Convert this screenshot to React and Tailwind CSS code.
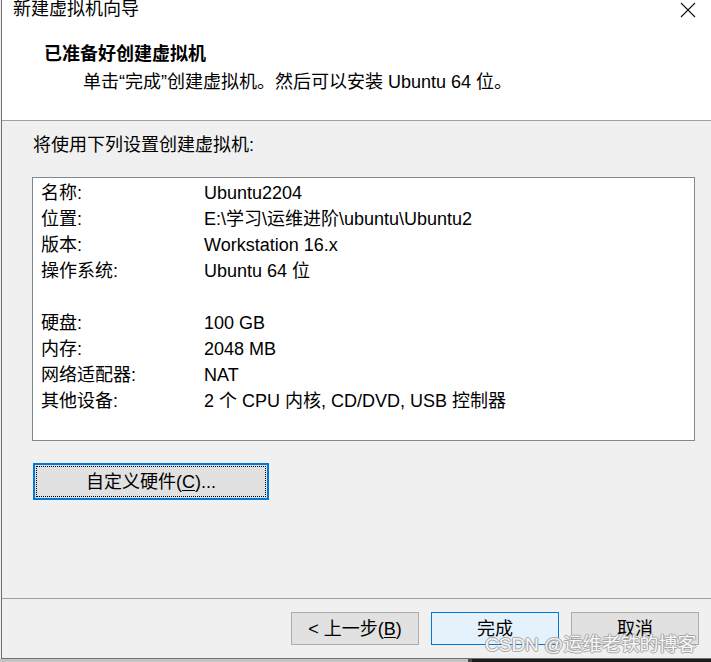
import React from "react";

const rows = [
  ["名称:", "Ubuntu2204"],
  ["位置:", "E:\\学习\\运维进阶\\ubuntu\\Ubuntu2"],
  ["版本:", "Workstation 16.x"],
  ["操作系统:", "Ubuntu 64 位"],
  ["", ""],
  ["硬盘:", "100 GB"],
  ["内存:", "2048 MB"],
  ["网络适配器:", "NAT"],
  ["其他设备:", "2 个 CPU 内核, CD/DVD, USB 控制器"],
];

const font = "font-['Liberation_Sans','Noto_Sans_CJK_SC',sans-serif]";

export default function App() {
  return (
    <div className={`w-[711px] h-[662px] bg-[#f0f0f0] relative overflow-hidden text-black ${font}`}>
      <div className="ml-px h-[659px] border-l border-b border-[#707070] flex flex-col">
        {/* header */}
        <div className="h-[121px] bg-white border-b border-[#a0a0a0] flex flex-col">
          <div className="h-[18px] flex items-center justify-between pl-[11px] pr-[15px]">
            <span className="text-[18px] leading-[18px]">新建虚拟机向导</span>
            <svg width="16" height="16" viewBox="0 0 16 16" className="mt-[2px]">
              <path d="M1 1L15 15M15 1L1 15" stroke="#111" strokeWidth="1.1" fill="none" />
            </svg>
          </div>
          <div className="pl-[42px] mt-[23px] text-[18px] leading-[26px] font-bold">已准备好创建虚拟机</div>
          <div className="pl-[81px] mt-[2px] text-[18px] leading-[26px]">
            单击“完成”创建虚拟机。然后可以安装 Ubuntu 64 位。
          </div>
        </div>

        {/* content */}
        <div className="flex-1 flex flex-col pl-[30px]">
          <div className="mt-[11px] pl-px text-[18px] leading-[26px]">将使用下列设置创建虚拟机:</div>
          <div className="mt-[19px] w-[663px] h-[264px] bg-white border border-[#828790] pt-[2px]">
            {rows.map(([k, v], i) => (
              <div key={i} className="h-[26px] flex text-[18px] leading-[26px] pl-[8px]">
                <span className="w-[163px] shrink-0">{k}</span>
                <span className="whitespace-nowrap">{v}</span>
              </div>
            ))}
          </div>
          <button className="mt-[22px] ml-px w-[236px] h-[37px] bg-[#e1e1e1] border-2 border-[#0078d7] p-px">
            <div className="w-full h-full border border-dotted border-black flex items-center justify-center text-[18px] leading-[26px]">
              <span>
                自定义硬件(<span className="underline underline-offset-2">C</span>)...
              </span>
            </div>
          </button>
        </div>

        {/* footer */}
        <div className="h-[60px] border-t border-[#a0a0a0] flex items-start gap-[12px] pl-[289px] pt-[13px]">
          <button className="w-[128px] h-[33px] bg-[#e1e1e1] border border-[#adadad] text-[18px] leading-[26px] flex items-center justify-center">
            &lt; 上一步(<span className="underline underline-offset-2">B</span>)
          </button>
          <button className="w-[128px] h-[33px] bg-[#e5f1fb] border border-[#0078d7] text-[18px] leading-[26px] flex items-center justify-center">
            完成
          </button>
          <button className="w-[128px] h-[33px] bg-[#e1e1e1] border border-[#adadad] text-[18px] leading-[26px] flex items-center justify-center">
            取消
          </button>
        </div>
      </div>

      {/* shadow strip */}
      <div className="h-[3px] flex">
        <div className="w-[468px] bg-[#c4c4c4]" />
        <div className="w-[4px] bg-[#4a4a4a]" />
        <div className="flex-1 bg-[#1c1c1c]" />
      </div>

      {/* watermark */}
      <div className="absolute left-[485px] top-[632px] text-[19px] leading-[26px] whitespace-nowrap text-[rgba(255,255,255,0.92)] [text-shadow:1px_0_#a6a6a6,-1px_0_#a6a6a6,0_1px_#a6a6a6,0_-1px_#a6a6a6]">
        CSDN @运维老铁的博客
      </div>
    </div>
  );
}
